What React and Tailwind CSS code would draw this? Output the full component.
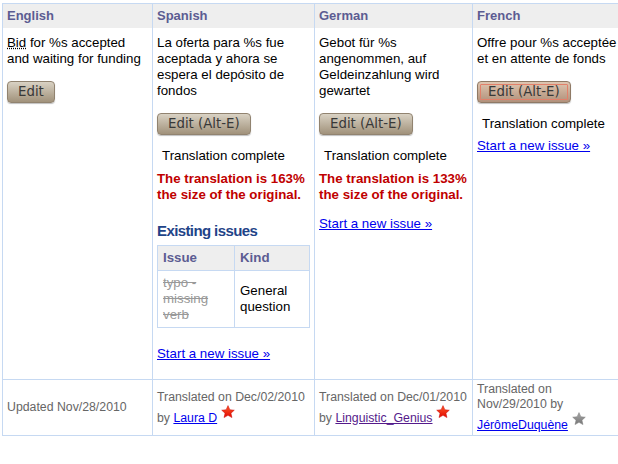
import React from 'react'

function EditButton({ label, focused }) {
  const base = "font-['DejaVu_Sans',sans-serif] text-[13.33px] leading-[20px] h-[22px] px-[10px] rounded-[4px] border text-[#383838] shadow-[0_1px_1px_rgba(0,0,0,0.25)] bg-linear-to-b"
  const look = focused
    ? ' border-[#8f7a66] from-[#dfc6b1] to-[#b1917b] outline-solid outline-1 outline-[#e2806a] outline-offset-[-4px]'
    : ' border-[#918370] from-[#d9d2c4] to-[#a1927b]'
  return <button className={base + look}>{label}</button>
}

function Star({ gray, id }) {
  return (
    <svg width="14" height="14" viewBox="0 0 24 24" className="inline-block align-[3px] ml-[4px]">
      <defs>
        <linearGradient id={id} x1="0" y1="0" x2="0" y2="1">
          <stop offset="0" stopColor={gray ? '#a8a8a8' : '#ff5a2a'} />
          <stop offset="1" stopColor={gray ? '#767676' : '#e00800'} />
        </linearGradient>
      </defs>
      <path
        d="M12 1l3.2 7.1 7.6.8-5.7 5.1 1.7 7.6L12 17.7l-6.8 3.9 1.7-7.6L1.2 8.9l7.6-.8z"
        fill={`url(#${id})`}
        stroke={gray ? '#7a7a7a' : '#c80000'}
        strokeWidth="0.8"
      />
    </svg>
  )
}

const link = 'text-[#0000ee] underline'

export default function App() {
  const th = 'bg-[#eeeeee] border-t border-l border-[#c6d9f2] h-[25px] px-[4px] text-left align-middle font-bold text-[13px] text-[#5c5c92]'
  const td = 'border-l border-[#c6d9f2] px-[4px] pt-[7px] align-top'
  const tf = 'border-l border-t border-b border-[#c6d9f2] px-[4px] h-[57px] align-middle text-[12.3px] leading-[15px] text-[#666666]'

  return (
    <div className="font-['Liberation_Sans',Arial,sans-serif] text-[13.3px] leading-[16px] text-black bg-white w-[618px] h-[464px] overflow-hidden">
      <table className="table-fixed border-separate border-spacing-0 ml-[2px] mt-[3px] w-[640px]">
        <colgroup>
          <col className="w-[150px]" />
          <col className="w-[162px]" />
          <col className="w-[158px]" />
          <col className="w-[170px]" />
        </colgroup>
        <thead>
          <tr>
            <th className={th}>English</th>
            <th className={th}>Spanish</th>
            <th className={th}>German</th>
            <th className={th}>French</th>
          </tr>
        </thead>
        <tbody>
          <tr>
            <td className={td}>
              <p>
                <span className="underline decoration-dotted">Bid</span> for %s accepted and waiting for funding
              </p>
              <div className="mt-[14px]">
                <EditButton label="Edit" />
              </div>
            </td>
            <td className={td + ' pb-[17px]'}>
              <p>La oferta para %s fue aceptada y ahora se espera el depósito de fondos</p>
              <div className="mt-[14px]">
                <EditButton label="Edit (Alt-E)" />
              </div>
              <p className="mt-[13px] pl-[5px]">Translation complete</p>
              <p className="mt-[7px] font-bold text-[#c00000]">The translation is 163% the size of the original.</p>
              <h3 className="mt-[19px] text-[15px] leading-[18px] font-bold tracking-[-0.6px] text-[#1f4488]">Existing issues</h3>
              <table className="mt-[5px] w-full table-fixed border-separate border-spacing-0 border-t border-l border-[#c6d9f2]">
                <colgroup>
                  <col className="w-[77px]" />
                  <col />
                </colgroup>
                <thead>
                  <tr>
                    <th className="bg-[#eeeeee] h-[25px] px-[5px] text-left font-bold text-[#5c5c92] border-r border-b border-[#c6d9f2]">Issue</th>
                    <th className="bg-[#eeeeee] h-[25px] px-[5px] text-left font-bold text-[#5c5c92] border-r border-b border-[#c6d9f2]">Kind</th>
                  </tr>
                </thead>
                <tbody>
                  <tr>
                    <td className="px-[5px] py-[4px] align-middle text-[#999999] line-through border-r border-b border-[#c6d9f2]">typo - missing verb</td>
                    <td className="px-[5px] py-[4px] align-middle border-r border-b border-[#c6d9f2]">General question</td>
                  </tr>
                </tbody>
              </table>
              <p className="mt-[18px]">
                <a href="#" className={link}>Start a new issue »</a>
              </p>
            </td>
            <td className={td}>
              <p>Gebot für %s angenommen, auf Geldeinzahlung wird gewartet</p>
              <div className="mt-[14px]">
                <EditButton label="Edit (Alt-E)" />
              </div>
              <p className="mt-[13px] pl-[5px]">Translation complete</p>
              <p className="mt-[7px] font-bold text-[#c00000]">The translation is 133% the size of the original.</p>
              <p className="mt-[13px]">
                <a href="#" className={link}>Start a new issue »</a>
              </p>
            </td>
            <td className={td + ' pr-[23px]'}>
              <p>Offre pour %s acceptée et en attente de fonds</p>
              <div className="mt-[14px]">
                <EditButton label="Edit (Alt-E)" focused />
              </div>
              <p className="mt-[13px] pl-[5px]">Translation complete</p>
              <p className="mt-[6px]">
                <a href="#" className={link}>Start a new issue »</a>
              </p>
            </td>
          </tr>
          <tr>
            <td className={tf}>Updated Nov/28/2010</td>
            <td className={tf}>
              Translated on Dec/02/2010 by <a href="#" className={link}>Laura D</a>
              <Star id="s1" />
            </td>
            <td className={tf}>
              Translated on Dec/01/2010 by <a href="#" className="text-[#551a8b] underline">Linguistic_Genius</a>
              <Star id="s2" />
            </td>
            <td className={tf + ' pr-[23px]'}>
              Translated on Nov/29/2010 by <a href="#" className={link}>JérômeDuquène</a>
              <Star id="s3" gray />
            </td>
          </tr>
        </tbody>
      </table>
    </div>
  )
}
